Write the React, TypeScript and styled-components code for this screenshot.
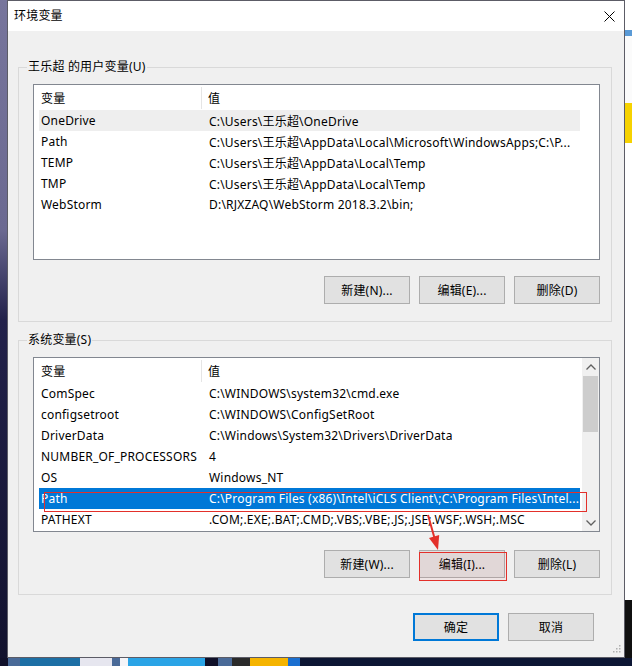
import React from "react";
import styled, { createGlobalStyle } from "styled-components";

const GlobalStyle = createGlobalStyle`
  html, body { margin: 0; padding: 0; }
  body {
    width: 632px; height: 666px; overflow: hidden;
    background: #12122e;
    font-family: "Noto Sans", "Noto Sans CJK SC", sans-serif;
    font-size: 12px; color: #000;
    letter-spacing: 0.2px;
  }
  * { box-sizing: border-box; }
`;

const Desktop = styled.div`
  position: relative;
  width: 632px;
  height: 666px;
  display: flex;
  flex-direction: column;
`;

const Upper = styled.div`
  display: flex;
  height: 658px;
`;

const LeftEdge = styled.div`
  width: 7px;
  background: linear-gradient(#77759c 0, #6b6991 230px, #22214a 320px, #12122e 100%);
`;

const RightEdge = styled.div`
  width: 7px;
  display: flex;
  flex-direction: column;
  background: #ffffff;
`;

const EdgeBand = styled.div<{ $h: number; $c: string }>`
  height: ${(p) => p.$h}px;
  flex-shrink: 0;
  background: ${(p) => p.$c};
`;

const EdgeFill = styled.div`
  flex: 1;
  background: #ffffff;
`;

const Taskbar = styled.div`
  height: 8px;
  background: linear-gradient(90deg,
    #10102a 0, #10102a 8px, #4a6a98 8px, #4a6a98 20px, #1d6fa5 20px, #1d6fa5 80px,
    #e6e6ef 80px, #e6e6ef 112px, #4a6a98 112px, #4a6a98 120px, #f4f4f8 120px, #f4f4f8 128px,
    #2aa4e6 128px, #2aa4e6 205px, #0f0f28 205px, #0f0f28 218px, #4a6a98 218px, #4a6a98 232px,
    #2a2a2a 232px, #2a2a2a 250px, #f5b400 250px, #f5b400 288px, #1a6fd0 288px, #1a6fd0 300px,
    #0d1634 300px, #0d1634 100%);
`;

const Window = styled.div`
  width: 618px;
  border: 1px solid #5c5c66;
  background: #f0f0f0;
  display: flex;
  flex-direction: column;
`;

const TitleBar = styled.div`
  height: 30px;
  background: #ffffff;
  display: flex;
  align-items: center;
  justify-content: space-between;
  padding-left: 6px;
`;

const Title = styled.span`
  font-size: 12px;
  line-height: 16px;
  color: #000;
`;

const CloseButton = styled.div`
  width: 30px;
  height: 30px;
  display: flex;
  align-items: center;
  justify-content: center;
`;

const Body = styled.div`
  flex: 1;
  display: flex;
  flex-direction: column;
  padding: 28px 12px 0 10px;
`;

const Group = styled.fieldset<{ $gapTop?: number }>`
  margin: ${(p) => p.$gapTop ?? 0}px 0 0 0;
  padding: 0;
  border: 1px solid #d9d9d9;
  min-inline-size: 0;
`;

const Legend = styled.legend`
  margin-left: 8px;
  padding: 0 1px;
  font-size: 12px;
  line-height: 16px;
  color: #000;
`;

const GroupContent = styled.div<{ $top: number; $gap: number; $bottom: number }>`
  display: flex;
  flex-direction: column;
  gap: ${(p) => p.$gap}px;
  padding: ${(p) => p.$top}px 11px ${(p) => p.$bottom}px 14px;
`;

const ListBox = styled.div<{ $height: number }>`
  height: ${(p) => p.$height}px;
  border: 1px solid #828790;
  background: #ffffff;
  display: flex;
  overflow: hidden;
`;

const ListContent = styled.div`
  flex: 1;
  display: flex;
  flex-direction: column;
  padding-left: 5px;
  overflow: hidden;
`;

const HeaderRow = styled.div`
  height: 25px;
  display: flex;
  align-items: center;
  flex-shrink: 0;
`;

const HeaderCell = styled.div<{ $first?: boolean }>`
  ${(p) => (p.$first ? "width: 163px; padding-left: 2px;" : "flex: 1; padding-left: 6px;")}
  height: 22px;
  display: flex;
  align-items: center;
  white-space: nowrap;
  ${(p) => (p.$first ? "border-right: 1px solid #e5e5e5;" : "")}
`;

const Row = styled.div<{ $state?: "selected" | "inactive" }>`
  width: 541px;
  height: 21px;
  flex-shrink: 0;
  display: flex;
  align-items: center;
  white-space: nowrap;
  background: ${(p) =>
    p.$state === "selected" ? "#0078d7" : p.$state === "inactive" ? "#eeeeee" : "transparent"};
  color: ${(p) => (p.$state === "selected" ? "#ffffff" : "#000000")};
`;

const NameCell = styled.div`
  width: 163px;
  padding-left: 2px;
  overflow: hidden;
`;

const ValueCell = styled.div`
  flex: 1;
  padding-left: 7px;
  overflow: hidden;
`;

const ScrollBar = styled.div`
  width: 17px;
  background: #f0f0f0;
  display: flex;
  flex-direction: column;
`;

const ScrollArrow = styled.div`
  height: 17px;
  display: flex;
  align-items: center;
  justify-content: center;
`;

const ScrollTrack = styled.div`
  flex: 1;
  padding: 1px 1px 0 1px;
`;

const ScrollThumb = styled.div`
  height: 56px;
  background: #cdcdcd;
`;

const ButtonRow = styled.div<{ $pad?: number }>`
  display: flex;
  justify-content: flex-end;
  gap: 9px;
  padding-right: ${(p) => p.$pad ?? 0}px;
`;

const Button = styled.div<{ $default?: boolean }>`
  width: 86px;
  height: 28px;
  display: flex;
  align-items: center;
  justify-content: center;
  background: #e1e1e1;
  border: ${(p) => (p.$default ? "2px solid #0078d7" : "1px solid #adadad")};
  font-size: 12px;
  color: #000;
  white-space: nowrap;
`;

const FooterRow = styled(ButtonRow)`
  margin-top: 18px;
`;

const Marker = styled.div<{ $l: number; $t: number; $w: number; $h: number; $fill?: boolean }>`
  position: absolute;
  left: ${(p) => p.$l}px;
  top: ${(p) => p.$t}px;
  width: ${(p) => p.$w}px;
  height: ${(p) => p.$h}px;
  border: 1px solid #e3302a;
  background: ${(p) => (p.$fill ? "rgba(230, 40, 40, 0.05)" : "transparent")};
  pointer-events: none;
`;

const ArrowSvg = styled.svg`
  position: absolute;
  left: 420px;
  top: 510px;
  pointer-events: none;
`;

const Grip = styled.svg`
  position: absolute;
  left: 612px;
  top: 644px;
`;

type Item = { name: string; value: string; state?: "selected" | "inactive" };

const userVars: Item[] = [
  { name: "OneDrive", value: "C:\\Users\\王乐超\\OneDrive", state: "inactive" },
  { name: "Path", value: "C:\\Users\\王乐超\\AppData\\Local\\Microsoft\\WindowsApps;C:\\P..." },
  { name: "TEMP", value: "C:\\Users\\王乐超\\AppData\\Local\\Temp" },
  { name: "TMP", value: "C:\\Users\\王乐超\\AppData\\Local\\Temp" },
  { name: "WebStorm", value: "D:\\RJXZAQ\\WebStorm 2018.3.2\\bin;" },
];

const sysVars: Item[] = [
  { name: "ComSpec", value: "C:\\WINDOWS\\system32\\cmd.exe" },
  { name: "configsetroot", value: "C:\\WINDOWS\\ConfigSetRoot" },
  { name: "DriverData", value: "C:\\Windows\\System32\\Drivers\\DriverData" },
  { name: "NUMBER_OF_PROCESSORS", value: "4" },
  { name: "OS", value: "Windows_NT" },
  { name: "Path", value: "C:\\Program Files (x86)\\Intel\\iCLS Client\\;C:\\Program Files\\Intel...", state: "selected" },
  { name: "PATHEXT", value: ".COM;.EXE;.BAT;.CMD;.VBS;.VBE;.JS;.JSE;.WSF;.WSH;.MSC" },
];

const Chevron = ({ up }: { up?: boolean }) => (
  <svg width="10" height="6" viewBox="0 0 10 6">
    <polyline
      points={up ? "0.5,5.5 5,1 9.5,5.5" : "0.5,0.5 5,5 9.5,0.5"}
      fill="none"
      stroke="#606060"
      strokeWidth="1.3"
    />
  </svg>
);

const VarList = ({ items, height, scroll }: { items: Item[]; height: number; scroll?: boolean }) => (
  <ListBox $height={height}>
    <ListContent>
      <HeaderRow>
        <HeaderCell $first>变量</HeaderCell>
        <HeaderCell>值</HeaderCell>
      </HeaderRow>
      {items.map((it) => (
        <Row key={it.name + it.value} $state={it.state}>
          <NameCell>{it.name}</NameCell>
          <ValueCell>{it.value}</ValueCell>
        </Row>
      ))}
    </ListContent>
    {scroll && (
      <ScrollBar>
        <ScrollArrow>
          <Chevron up />
        </ScrollArrow>
        <ScrollTrack>
          <ScrollThumb />
        </ScrollTrack>
        <ScrollArrow>
          <Chevron />
        </ScrollArrow>
      </ScrollBar>
    )}
  </ListBox>
);

export default function App() {
  return (
    <>
      <GlobalStyle />
      <Desktop>
        <Upper>
          <LeftEdge />
          <Window>
            <TitleBar>
              <Title>环境变量</Title>
              <CloseButton>
                <svg width="11" height="11" viewBox="0 0 11 11">
                  <path d="M0.5 0.5 L10.5 10.5 M10.5 0.5 L0.5 10.5" stroke="#000" strokeWidth="1" />
                </svg>
              </CloseButton>
            </TitleBar>
            <Body>
              <Group>
                <Legend>王乐超 的用户变量(U)</Legend>
                <GroupContent $top={9} $gap={16} $bottom={17}>
                  <VarList items={userVars} height={176} />
                  <ButtonRow>
                    <Button>新建(N)...</Button>
                    <Button>编辑(E)...</Button>
                    <Button>删除(D)</Button>
                  </ButtonRow>
                </GroupContent>
              </Group>
              <Group $gapTop={10}>
                <Legend>系统变量(S)</Legend>
                <GroupContent $top={9} $gap={18} $bottom={16}>
                  <VarList items={sysVars} height={175} scroll />
                  <ButtonRow>
                    <Button>新建(W)...</Button>
                    <Button>编辑(I)...</Button>
                    <Button>删除(L)</Button>
                  </ButtonRow>
                </GroupContent>
              </Group>
              <FooterRow $pad={18}>
                <Button $default>确定</Button>
                <Button>取消</Button>
              </FooterRow>
            </Body>
          </Window>
          <RightEdge>
            <EdgeBand $h={30} $c="#ffffff" />
            <EdgeBand $h={6} $c="#5a9ad6" />
            <EdgeBand $h={67} $c="#fbfbfb" />
            <EdgeBand $h={40} $c="#f6d200" />
            <EdgeFill />
            <EdgeBand $h={58} $c="#101010" />
          </RightEdge>
        </Upper>
        <Taskbar />
        <Marker $l={44} $t={492} $w={543} $h={20} />
        <Marker $l={419} $t={552} $w={88} $h={29} $fill />
        <ArrowSvg width="30" height="45" viewBox="420 510 30 45">
          <line x1="428" y1="515" x2="434.5" y2="538" stroke="#e3302a" strokeWidth="2" />
          <polygon points="438,550 439.2,535 429,538" fill="#e3302a" />
        </ArrowSvg>
        <Grip width="10" height="10" viewBox="0 0 10 10">
          <rect x="7" y="1" width="1.5" height="1.5" fill="#b0b0b0" />
          <rect x="4" y="4" width="1.5" height="1.5" fill="#b0b0b0" />
          <rect x="7" y="4" width="1.5" height="1.5" fill="#b0b0b0" />
          <rect x="1" y="7" width="1.5" height="1.5" fill="#b0b0b0" />
          <rect x="4" y="7" width="1.5" height="1.5" fill="#b0b0b0" />
          <rect x="7" y="7" width="1.5" height="1.5" fill="#b0b0b0" />
        </Grip>
      </Desktop>
    </>
  );
}
